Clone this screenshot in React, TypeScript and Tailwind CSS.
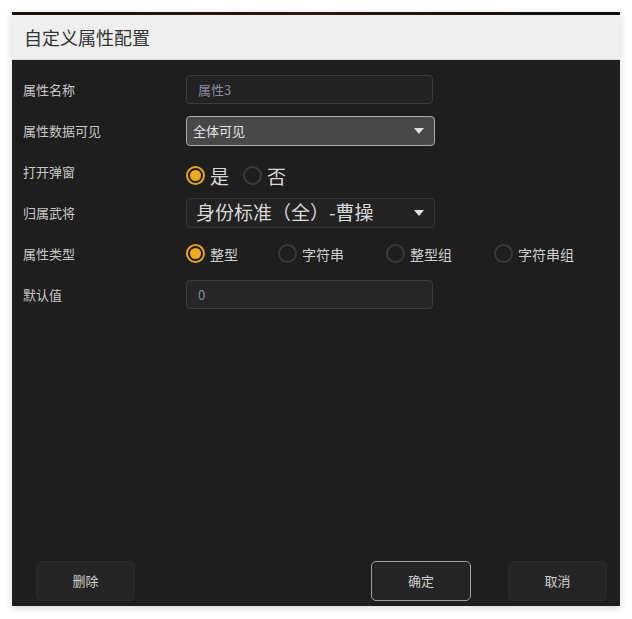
import React from "react"

const font = { fontFamily: '"Noto Sans CJK SC", "Noto Sans", sans-serif' }

const Radio = ({ checked, label, big }: { checked?: boolean; label: string; big?: boolean }) => (
  <div className="flex items-center gap-[5px]">
    <span
      className={
        "flex items-center justify-center w-[19px] h-[19px] rounded-full border-2 " +
        (checked ? "border-[#e8a21c]" : "border-[#3a3a3a]")
      }
    >
      {checked && <span className="w-[11px] h-[11px] rounded-full bg-[#f0aa1e]" />}
    </span>
    <span className={big ? "text-[19px] text-[#d6d6d6] leading-none" : "text-[14px] text-[#cfcfcf] leading-none"}>
      {label}
    </span>
  </div>
)

const Row = ({ label, children }: { label: string; children: React.ReactNode }) => (
  <div className="flex items-center h-[41px]">
    <div className="w-[163px] text-[13px] text-[#c8c8c8]">{label}</div>
    <div className="flex-1 flex items-center">{children}</div>
  </div>
)

const Caret = () => (
  <svg width="10" height="6" viewBox="0 0 10 6">
    <path d="M0 0h10L5 6z" fill="#e0e0e0" />
  </svg>
)

export default function App() {
  return (
    <div className="w-[632px] h-[619px] bg-white pt-[12px] pl-[12px]" style={font}>
      <div className="w-[608px] h-[594px] flex flex-col shadow-[0_2px_8px_rgba(0,0,0,0.15)]">
        <div className="h-[3px] bg-gradient-to-r from-[#1a0f0c] via-[#2a1810] to-[#0c0c0c]" />
        <div className="h-[45px] bg-[#efefef] flex items-center px-[12px] border-b border-[#d8d8d8]">
          <span className="text-[18px] text-[#333]">自定义属性配置</span>
        </div>
        <div className="flex-1 bg-[#1e1e1e] flex flex-col px-[11px] pt-[9px] pb-[5px]">
          <Row label="属性名称">
            <div className="w-[247px] h-[29px] rounded-[4px] border border-[#3c3c3c] bg-[#222] flex items-center px-[11px] text-[13px] text-[#8a8aa0]">
              属性3
            </div>
          </Row>
          <Row label="属性数据可见">
            <div className="w-[249px] h-[30px] rounded-[4px] border border-[#a8a8a8] bg-[#484848] flex items-center justify-between pl-[6px] pr-[10px] text-[13px] text-[#e6e6e6]">
              <span>全体可见</span>
              <Caret />
            </div>
          </Row>
          <Row label="打开弹窗">
            <div className="flex items-center gap-[14px] pt-[8px]">
              <Radio checked label="是" big />
              <Radio label="否" big />
            </div>
          </Row>
          <Row label="归属武将">
            <div className="w-[249px] h-[30px] rounded-[4px] border border-[#363636] bg-[#222] flex items-center justify-between pl-[9px] pr-[10px] text-[19px] text-[#d8d8d8]">
              <span>身份标准（全）-曹操</span>
              <Caret />
            </div>
          </Row>
          <Row label="属性类型">
            <div className="flex items-center">
              <div className="w-[92px]"><Radio checked label="整型" /></div>
              <div className="w-[108px]"><Radio label="字符串" /></div>
              <div className="w-[108px]"><Radio label="整型组" /></div>
              <div><Radio label="字符串组" /></div>
            </div>
          </Row>
          <Row label="默认值">
            <div className="w-[247px] h-[29px] rounded-[4px] border border-[#3c3c3c] bg-[#262626] flex items-center px-[11px] text-[13px] text-[#8a8aa0]">
              0
            </div>
          </Row>
          <div className="flex-1" />
          <div className="flex items-center pl-[13px] pr-[2px] text-[13px] text-[#cfcfcf]">
            <button className="w-[99px] h-[40px] rounded-[5px] bg-[#252525] border border-[#2a2a2a]">删除</button>
            <div className="flex-1" />
            <button className="w-[100px] h-[40px] rounded-[5px] bg-[#242424] border border-[#a0a0a0]">确定</button>
            <button className="w-[99px] h-[40px] rounded-[5px] bg-[#252525] border border-[#2a2a2a] ml-[37px]">取消</button>
          </div>
        </div>
      </div>
    </div>
  )
}
